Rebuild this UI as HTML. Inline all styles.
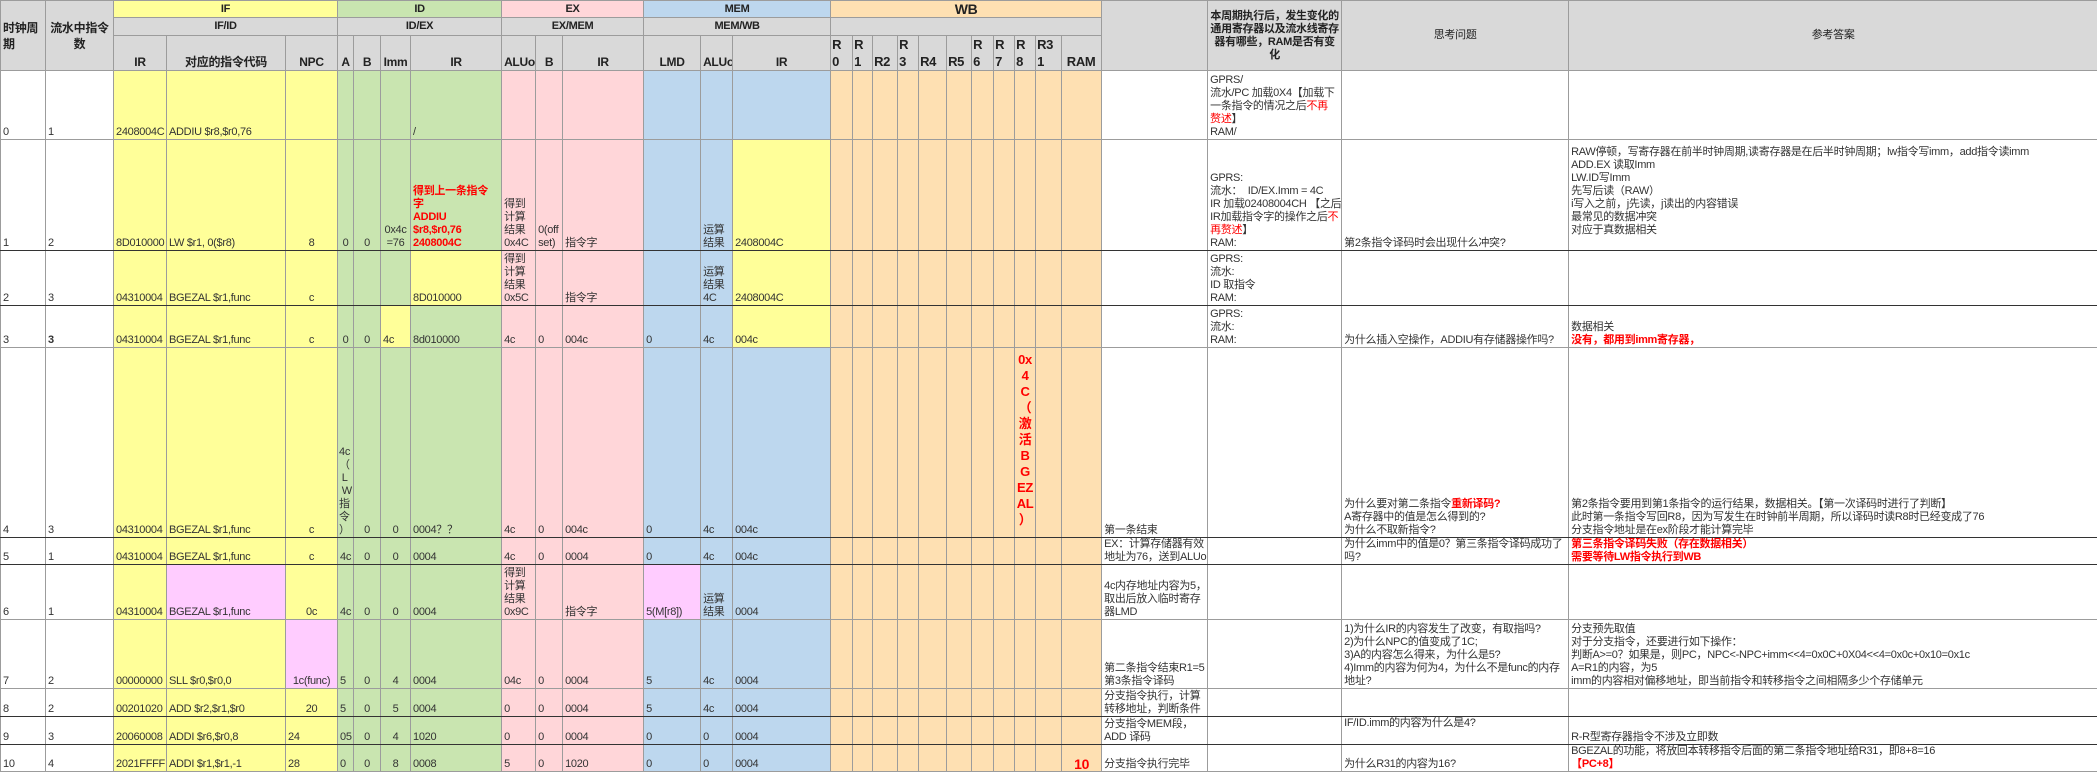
<!DOCTYPE html>
<html><head><meta charset="utf-8">
<style>
html,body{margin:0;padding:0;background:#fff;width:2097px;height:773px;overflow:hidden}
table{border-collapse:collapse;table-layout:fixed;width:2097px;font-family:"Liberation Sans Narrow","Liberation Sans","Noto Sans CJK SC",sans-serif;}
td{border:1px solid #9c9c9c;padding:0 2px;font-size:11px;line-height:13px;color:#333;vertical-align:bottom;white-space:nowrap;overflow:hidden;letter-spacing:-0.3px}
.h{background:#d9d9d9;font-weight:bold;color:#222;text-align:center;vertical-align:middle}
.hc{background:#d9d9d9;font-weight:bold;color:#222;text-align:center;font-size:12px;line-height:15px}
.hr{background:#d9d9d9;font-weight:bold;color:#222;text-align:left;font-size:13px;line-height:17px;padding-left:1px}
.y{background:#ffff99}.g{background:#c9e5b0}.p{background:#ffd6d9}.b{background:#bdd7ee}.o{background:#fee0b2}.m{background:#ffccff}
.c{text-align:center}
.r{color:#f00;font-weight:bold}
.rt{color:#f00}
.k{border-left:1px solid #222}
.t{vertical-align:top}
tr.bk td{border-bottom:1px solid #333}
</style></head><body>
<table>
<colgroup>
<col style="width:45px"><col style="width:68px"><col style="width:53px"><col style="width:119px"><col style="width:52px">
<col style="width:16px"><col style="width:27px"><col style="width:30px"><col style="width:91px">
<col style="width:34px"><col style="width:27px"><col style="width:81px">
<col style="width:57px"><col style="width:32px"><col style="width:98px">
<col style="width:22px"><col style="width:20px"><col style="width:25px"><col style="width:21px"><col style="width:28px"><col style="width:25px"><col style="width:22px"><col style="width:21px"><col style="width:21px"><col style="width:26px"><col style="width:40px">
<col style="width:106px"><col style="width:134px"><col style="width:227px"><col style="width:529px">
</colgroup>
<tr style="height:17px">
<td class="h" rowspan="3" style="text-align:left;font-size:12px;line-height:16px">时钟周<br>期</td>
<td class="h" rowspan="3" style="font-size:12px;line-height:16px">流水中指令<br>数</td>
<td class="h y" colspan="3">IF</td>
<td class="h g k" colspan="4">ID</td>
<td class="h p" colspan="3">EX</td>
<td class="h b" colspan="3">MEM</td>
<td class="h o" colspan="11" style="font-size:14px">WB</td>
<td class="h" rowspan="3"></td>
<td class="h" rowspan="3" style="white-space:normal;font-size:11px;line-height:13px">本周期执行后，发生变化的通用寄存器以及流水线寄存器有哪些，RAM是否有变化</td>
<td class="h" rowspan="3" style="font-weight:normal">思考问题</td>
<td class="h" rowspan="3" style="font-weight:normal">参考答案</td>
</tr>
<tr style="height:18px">
<td class="h" colspan="3">IF/ID</td>
<td class="h k" colspan="4">ID/EX</td>
<td class="h" colspan="3">EX/MEM</td>
<td class="h" colspan="3">MEM/WB</td>
<td class="h" colspan="11"></td>
</tr>
<tr style="height:34px">
<td class="hc">IR</td><td class="hc k">对应的指令代码</td><td class="hc">NPC</td>
<td class="hc k">A</td><td class="hc">B</td><td class="hc">Imm</td><td class="hc">IR</td>
<td class="hc">ALUo</td><td class="hc k">B</td><td class="hc k">IR</td>
<td class="hc k">LMD</td><td class="hc k">ALUo</td><td class="hc">IR</td>
<td class="hr">R<br>0</td><td class="hr">R<br>1</td><td class="hr">R2</td><td class="hr">R<br>3</td><td class="hr">R4</td><td class="hr">R5</td><td class="hr">R<br>6</td><td class="hr">R<br>7</td><td class="hr">R<br>8</td><td class="hr">R3<br>1</td><td class="hr c">RAM</td>
</tr>

<tr style="height:69px">
<td>0</td><td>1</td><td class="y">2408004C</td><td class="y k">ADDIU $r8,$r0,76</td><td class="y"></td>
<td class="g k"></td><td class="g"></td><td class="g"></td><td class="g">/</td>
<td class="p"></td><td class="p k"></td><td class="p k"></td>
<td class="b k"></td><td class="b k"></td><td class="b"></td>
<td class="o"></td><td class="o"></td><td class="o"></td><td class="o"></td><td class="o"></td><td class="o"></td><td class="o"></td><td class="o"></td><td class="o"></td><td class="o"></td><td class="o"></td>
<td></td><td>GPRS/<br>流水/PC 加载0X4【加载下<br>一条指令的情况之后<span class="rt">不再</span><br><span class="rt">赘述</span>】<br>RAM/</td><td></td><td></td>
</tr>
<tr style="height:111px" class="bk">
<td>1</td><td>2</td><td class="y">8D010000</td><td class="y k">LW $r1, 0($r8)</td><td class="y c">8</td>
<td class="g k c">0</td><td class="g c">0</td><td class="g c">0x4c<br>=76</td><td class="g r">得到上一条指令<br>字<br>ADDIU<br>$r8,$r0,76<br>2408004C</td>
<td class="p">得到<br>计算<br>结果<br>0x4C</td><td class="p k">0(off<br>set)</td><td class="p k">指令字</td>
<td class="b k"></td><td class="b k">运算<br>结果</td><td class="y">2408004C</td>
<td class="o"></td><td class="o"></td><td class="o"></td><td class="o"></td><td class="o"></td><td class="o"></td><td class="o"></td><td class="o"></td><td class="o"></td><td class="o"></td><td class="o"></td>
<td></td><td>GPRS:<br>流水：&nbsp; ID/EX.Imm = 4C<br>IR 加载02408004CH 【之后<br>IR加载指令字的操作之后<span class="rt">不</span><br><span class="rt">再赘述</span>】<br>RAM:</td><td>第2条指令译码时会出现什么冲突?</td><td>RAW停顿，写寄存器在前半时钟周期,读寄存器是在后半时钟周期；lw指令写imm，add指令读imm<br>ADD.EX 读取Imm<br>LW.ID写Imm<br>先写后读（RAW）<br>i写入之前，j先读，j读出的内容错误<br>最常见的数据冲突<br>对应于真数据相关<br>&nbsp;</td>
</tr>
<tr style="height:55px" class="bk">
<td>2</td><td>3</td><td class="y">04310004</td><td class="y k">BGEZAL $r1,func</td><td class="y c">c</td>
<td class="g k"></td><td class="g"></td><td class="g"></td><td class="y">8D010000</td>
<td class="p">得到<br>计算<br>结果<br>0x5C</td><td class="p k"></td><td class="p k">指令字</td>
<td class="b k"></td><td class="b k">运算<br>结果<br>4C</td><td class="y">2408004C</td>
<td class="o"></td><td class="o"></td><td class="o"></td><td class="o"></td><td class="o"></td><td class="o"></td><td class="o"></td><td class="o"></td><td class="o"></td><td class="o"></td><td class="o"></td>
<td></td><td>GPRS:<br>流水:<br>ID 取指令<br>RAM:</td><td></td><td></td>
</tr>
<tr style="height:42px">
<td>3</td><td><b>3</b></td><td class="y">04310004</td><td class="y k">BGEZAL $r1,func</td><td class="y c">c</td>
<td class="g k c">0</td><td class="g c">0</td><td class="y">4c</td><td class="g">8d010000</td>
<td class="p">4c</td><td class="p k">0</td><td class="p k">004c</td>
<td class="b k">0</td><td class="b k">4c</td><td class="y">004c</td>
<td class="o"></td><td class="o"></td><td class="o"></td><td class="o"></td><td class="o"></td><td class="o"></td><td class="o"></td><td class="o"></td><td class="o"></td><td class="o"></td><td class="o"></td>
<td></td><td>GPRS:<br>流水:<br>RAM:</td><td>为什么插入空操作，ADDIU有存储器操作吗?</td><td>数据相关<br><span class="r">没有，都用到imm寄存器，</span></td>
</tr>
<tr style="height:190px" class="bk">
<td>4</td><td>3</td><td class="y">04310004</td><td class="y k">BGEZAL $r1,func</td><td class="y c">c</td>
<td class="g k" style="padding:0 1px">4c<br>（<br>&nbsp;L<br>&nbsp;W<br>指<br>令<br>）</td><td class="g c">0</td><td class="g c">0</td><td class="g">0004？？</td>
<td class="p">4c</td><td class="p k">0</td><td class="p k">004c</td>
<td class="b k">0</td><td class="b k">4c</td><td class="b">004c</td>
<td class="o"></td><td class="o"></td><td class="o"></td><td class="o"></td><td class="o"></td><td class="o"></td><td class="o"></td><td class="o"></td>
<td class="o" style="color:#f00;font-weight:bold;font-size:13px;line-height:16px;text-align:center;padding:0;vertical-align:top;padding-top:4px">0x<br>4<br>C<br>（<br>激<br>活<br>B<br>G<br>EZ<br>AL<br>）</td>
<td class="o"></td><td class="o"></td>
<td>第一条结束</td><td></td><td>为什么要对第二条指令<span class="r">重新译码?</span><br>A寄存器中的值是怎么得到的?<br>为什么不取新指令?</td><td>第2条指令要用到第1条指令的运行结果，数据相关。【第一次译码时进行了判断】<br>此时第一条指令写回R8，因为写发生在时钟前半周期，所以译码时读R8时已经变成了76<br>分支指令地址是在ex阶段才能计算完毕</td>
</tr>
<tr style="height:27px" class="bk">
<td>5</td><td>1</td><td class="y">04310004</td><td class="y k">BGEZAL $r1,func</td><td class="y c">c</td>
<td class="g k">4c</td><td class="g c">0</td><td class="g c">0</td><td class="g">0004</td>
<td class="p">4c</td><td class="p k">0</td><td class="p k">0004</td>
<td class="b k">0</td><td class="b k">4c</td><td class="b">004c</td>
<td class="o"></td><td class="o"></td><td class="o"></td><td class="o"></td><td class="o"></td><td class="o"></td><td class="o"></td><td class="o"></td><td class="o"></td><td class="o"></td><td class="o"></td>
<td>EX：计算存储器有效<br>地址为76，送到ALUo</td><td></td><td>为什么imm中的值是0？第三条指令译码成功了<br>吗?</td><td class="t"><span class="r">第三条指令译码失败（存在数据相关）<br>需要等待LW指令执行到WB</span></td>
</tr>
<tr style="height:55px">
<td>6</td><td>1</td><td class="y">04310004</td><td class="m k">BGEZAL $r1,func</td><td class="y c">0c</td>
<td class="g k">4c</td><td class="g c">0</td><td class="g c">0</td><td class="g">0004</td>
<td class="p">得到<br>计算<br>结果<br>0x9C</td><td class="p k"></td><td class="p k">指令字</td>
<td class="m k">5(M[r8])</td><td class="b k">运算<br>结果</td><td class="b">0004</td>
<td class="o"></td><td class="o"></td><td class="o"></td><td class="o"></td><td class="o"></td><td class="o"></td><td class="o"></td><td class="o"></td><td class="o"></td><td class="o"></td><td class="o"></td>
<td>4c内存地址内容为5，<br>取出后放入临时寄存<br>器LMD</td><td></td><td></td><td></td>
</tr>
<tr style="height:69px">
<td>7</td><td>2</td><td class="y">00000000</td><td class="y k">SLL $r0,$r0,0</td><td class="m c">1c(func)</td>
<td class="g k">5</td><td class="g c">0</td><td class="g c">4</td><td class="g">0004</td>
<td class="p">04c</td><td class="p k">0</td><td class="p k">0004</td>
<td class="b k">5</td><td class="b k">4c</td><td class="b">0004</td>
<td class="o"></td><td class="o"></td><td class="o"></td><td class="o"></td><td class="o"></td><td class="o"></td><td class="o"></td><td class="o"></td><td class="o"></td><td class="o"></td><td class="o"></td>
<td>第二条指令结束R1=5<br>第3条指令译码</td><td></td><td>1)为什么IR的内容发生了改变，有取指吗?<br>2)为什么NPC的值变成了1C;<br>3)A的内容怎么得来，为什么是5?<br>4)Imm的内容为何为4，为什么不是func的内存<br>地址?</td><td>分支预先取值<br>对于分支指令，还要进行如下操作：<br>判断A&gt;=0？如果是，则PC，NPC&lt;-NPC+imm&lt;&lt;4=0x0C+0X04&lt;&lt;4=0x0c+0x10=0x1c<br>A=R1的内容，为5<br>imm的内容相对偏移地址，即当前指令和转移指令之间相隔多少个存储单元</td>
</tr>
<tr style="height:28px" class="bk">
<td>8</td><td>2</td><td class="y">00201020</td><td class="y k">ADD $r2,$r1,$r0</td><td class="y c">20</td>
<td class="g k">5</td><td class="g c">0</td><td class="g c">5</td><td class="g">0004</td>
<td class="p">0</td><td class="p k">0</td><td class="p k">0004</td>
<td class="b k">5</td><td class="b k">4c</td><td class="b">0004</td>
<td class="o"></td><td class="o"></td><td class="o"></td><td class="o"></td><td class="o"></td><td class="o"></td><td class="o"></td><td class="o"></td><td class="o"></td><td class="o"></td><td class="o"></td>
<td>分支指令执行，计算<br>转移地址，判断条件</td><td></td><td></td><td></td>
</tr>
<tr style="height:28px" class="bk">
<td>9</td><td>3</td><td class="y">20060008</td><td class="y k">ADDI $r6,$r0,8</td><td class="y">24</td>
<td class="g k">05</td><td class="g c">0</td><td class="g c">4</td><td class="g">1020</td>
<td class="p">0</td><td class="p k">0</td><td class="p k">0004</td>
<td class="b k">0</td><td class="b k">0</td><td class="b">0004</td>
<td class="o"></td><td class="o"></td><td class="o"></td><td class="o"></td><td class="o"></td><td class="o"></td><td class="o"></td><td class="o"></td><td class="o"></td><td class="o"></td><td class="o"></td>
<td>分支指令MEM段，<br>ADD 译码</td><td></td><td class="t">IF/ID.imm的内容为什么是4?</td><td>R-R型寄存器指令不涉及立即数</td>
</tr>
<tr style="height:27px">
<td>10</td><td>4</td><td class="y">2021FFFF</td><td class="y k">ADDI $r1,$r1,-1</td><td class="y">28</td>
<td class="g k">0</td><td class="g c">0</td><td class="g c">8</td><td class="g">0008</td>
<td class="p">5</td><td class="p k">0</td><td class="p k">1020</td>
<td class="b k">0</td><td class="b k">0</td><td class="b">0004</td>
<td class="o"></td><td class="o"></td><td class="o"></td><td class="o"></td><td class="o"></td><td class="o"></td><td class="o"></td><td class="o"></td><td class="o"></td><td class="o"></td><td class="o c" style="color:#f00;font-weight:bold;font-size:14px">10</td>
<td>分支指令执行完毕</td><td></td><td>为什么R31的内容为16?</td><td>BGEZAL的功能，将放回本转移指令后面的第二条指令地址给R31，即8+8=16<br><span class="r">【PC+8】</span></td>
</tr>
</table>
</body></html>
